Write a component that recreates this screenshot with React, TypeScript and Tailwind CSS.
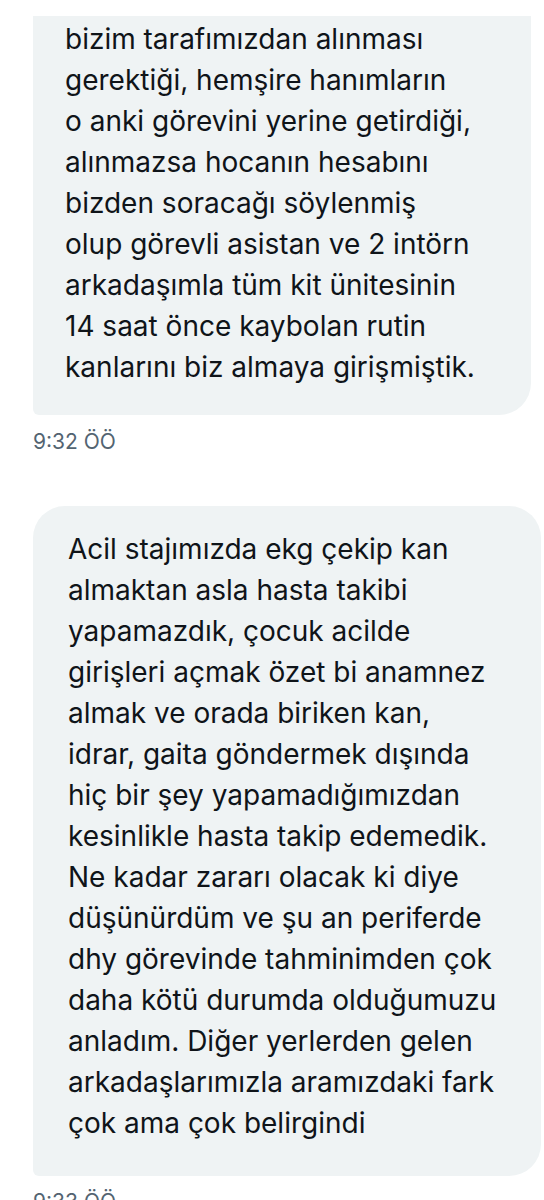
const first = [
  "bizim tarafımızdan alınması",
  "gerektiği, hemşire hanımların",
  "o anki görevini yerine getirdiği,",
  "alınmazsa hocanın hesabını",
  "bizden soracağı söylenmiş",
  "olup görevli asistan ve 2 intörn",
  "arkadaşımla tüm kit ünitesinin",
  "14 saat önce kaybolan rutin",
  "kanlarını biz almaya girişmiştik.",
];

const second = [
  "Acil stajımızda ekg çekip kan",
  "almaktan asla hasta takibi",
  "yapamazdık, çocuk acilde",
  "girişleri açmak özet bi anamnez",
  "almak ve orada biriken kan,",
  "idrar, gaita göndermek dışında",
  "hiç bir şey yapamadığımızdan",
  "kesinlikle hasta takip edemedik.",
  "Ne kadar zararı olacak ki diye",
  "düşünürdüm ve şu an periferde",
  "dhy görevinde tahminimden çok",
  "daha kötü durumda olduğumuzu",
  "anladım. Diğer yerlerden gelen",
  "arkadaşlarımızla aramızdaki fark",
  "çok ama çok belirgindi",
];

function Lines({ lines }: { lines: string[] }) {
  return (
    <>
      {lines.map((l) => (
        <div key={l} className="whitespace-nowrap">
          {l}
        </div>
      ))}
    </>
  );
}

export default function App() {
  return (
    <div
      className="w-[544px] h-[1200px] overflow-hidden bg-white pt-[16px] pl-[33px]"
      style={{ fontFamily: "Inter, 'Noto Sans', sans-serif" }}
    >
      <div className="w-[498px] bg-[#eff3f4] rounded-bl-[6px] rounded-br-[32px] pl-[32px] pt-[3px] pb-[27px] text-[28px] leading-[41px] text-[#0f1419]">
        <Lines lines={first} />
      </div>
      <div className="mt-[15px] text-[21px] leading-[24px] text-[#536471]">9:32 ÖÖ</div>

      <div className="mt-[52px] w-[508px] bg-[#eff3f4] rounded-tl-[32px] rounded-tr-[32px] rounded-br-[32px] rounded-bl-[6px] pl-[35px] pt-[23px] pb-[32px] text-[28px] leading-[41px] text-[#0f1419]">
        <Lines lines={second} />
      </div>
      <div className="mt-[14px] text-[21px] leading-[24px] text-[#536471]">9:33 ÖÖ</div>
    </div>
  );
}
